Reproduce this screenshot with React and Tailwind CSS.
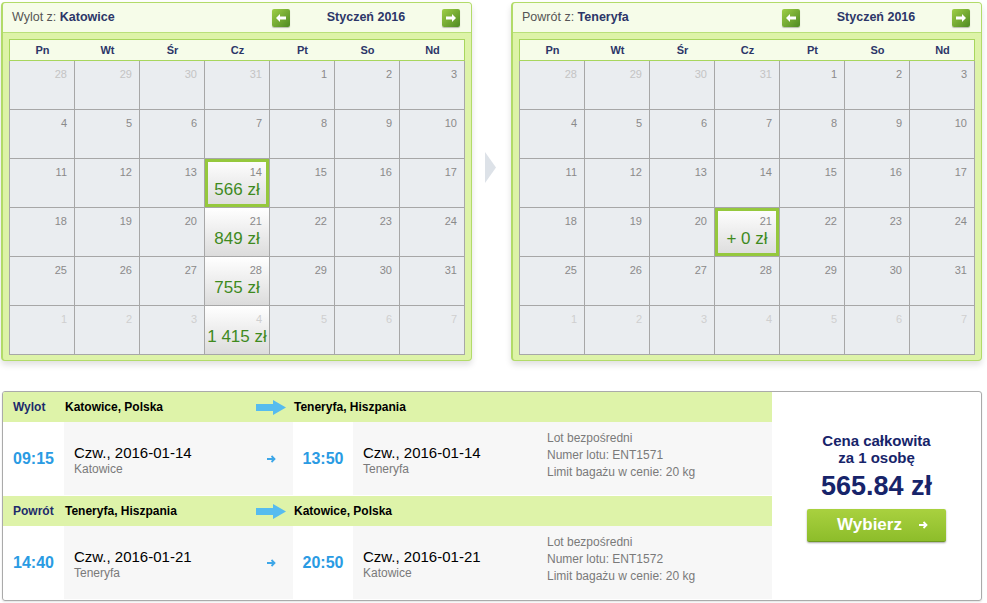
import React from "react";

const font = { fontFamily: '"Liberation Sans", Arial, sans-serif' };

const DAYS = ["Pn", "Wt", "Śr", "Cz", "Pt", "So", "Nd"];

// kind: "prev" | "cur" | "next"
function buildMonth(prices) {
  const cells = [];
  [28, 29, 30, 31].forEach((d) => cells.push({ d, kind: "prev" }));
  for (let d = 1; d <= 31; d++) cells.push({ d, kind: "cur" });
  for (let d = 1; d <= 7; d++) cells.push({ d, kind: "next" });
  return cells.map((c, i) => ({ ...c, ...(prices[i] || {}) }));
}

const outbound = buildMonth({
  17: { price: "566 zł", selected: true },
  24: { price: "849 zł" },
  31: { price: "755 zł" },
  38: { price: "1 415 zł" },
});

const inbound = buildMonth({
  24: { price: "+ 0 zł", selected: true },
});

function NavButton({ dir }) {
  return (
    <button className="w-[18px] h-[18px] rounded-[2px] flex items-center justify-center bg-gradient-to-br from-[#9fcf46] to-[#4e8a22] shadow-[0_1px_1px_rgba(0,0,0,0.25)]">
      <svg width="10" height="8" viewBox="0 0 10 8">
        {dir === "left" ? (
          <path d="M0 4 L4 0 L4 2.5 L10 2.5 L10 5.5 L4 5.5 L4 8 Z" fill="#fff" />
        ) : (
          <path d="M10 4 L6 0 L6 2.5 L0 2.5 L0 5.5 L6 5.5 L6 8 Z" fill="#fff" />
        )}
      </svg>
    </button>
  );
}

function DayCell({ cell }) {
  const numColor =
    cell.kind === "cur" ? "text-[#8a8a8a]" : cell.kind === "prev" ? "text-[#c4c4c4]" : "text-[#cfcfcf]";
  return (
    <div
      className={
        "relative h-[49px] border-r border-b border-[#a7a7a7] " +
        (cell.price ? "bg-gradient-to-b from-white to-[#dcdcdc]" : "bg-[#eaedf0]")
      }
    >
      {cell.selected && <div className="absolute inset-0 border-[3px] border-[#95c83d]" />}
      <span className={"absolute right-[7px] top-[5px] text-[11px] " + numColor}>{cell.d}</span>
      {cell.price && (
        <span className="absolute left-0 right-0 top-[18px] text-center text-[17px] text-[#3f8a1e]">
          {cell.price}
        </span>
      )}
    </div>
  );
}

function CalendarPanel({ label, city, cells, width }) {
  return (
    <div
      className="rounded-[4px] border border-[#b2db69] border-l-2 bg-[#ddf3a8] shadow-[0_4px_6px_rgba(0,0,0,0.12)]"
      style={{ width }}
    >
      <div className="h-[30px] flex items-center pl-[9px] pr-[11px] bg-[#f6fce9] border-b border-[#b9e07a] rounded-t-[3px]">
        <div className="w-[260px] text-[12.5px] text-[#555]">
          {label} <span className="font-bold text-[#2c3668]">{city}</span>
        </div>
        <NavButton dir="left" />
        <div className="flex-1 text-center text-[12.5px] font-bold text-[#2c3668]">Styczeń 2016</div>
        <NavButton dir="right" />
      </div>
      <div className="pt-[6px] pb-[5px] pl-[6px]">
        <div className="w-[456px]">
          <div className="h-[22px] grid grid-cols-[repeat(7,65px)] border border-[#a8d65e] bg-[#f6fce9]">
            {DAYS.map((d) => (
              <div key={d} className="flex items-center justify-center text-[11px] font-bold text-[#2c3668]">
                {d}
              </div>
            ))}
          </div>
          <div className="grid grid-cols-[repeat(7,65px)] border-l border-[#a7a7a7]">
            {cells.map((c, i) => (
              <DayCell key={i} cell={c} />
            ))}
          </div>
        </div>
      </div>
    </div>
  );
}

function BigArrow() {
  return (
    <svg width="30" height="15" viewBox="0 0 30 15">
      <path d="M0 4 L17 4 L17 0 L30 7.5 L17 15 L17 11 L0 11 Z" fill="#56bcef" />
    </svg>
  );
}

function SmallArrow({ color = "#3ea7e8" }) {
  return (
    <svg width="9" height="8" viewBox="0 0 9 8">
      <path d="M0 4 H7 M4.5 1 L7.5 4 L4.5 7" stroke={color} strokeWidth="1.8" fill="none" />
    </svg>
  );
}

function Leg({ title, from, to, depTime, arrTime, date, depCity, arrCity, flight }) {
  return (
    <div>
      <div className="h-[30px] grid grid-cols-[61px_229px_1fr] items-center bg-[#def3a9] text-[12px] font-bold">
        <div className="pl-[10px] text-[#1d2b6b]">{title}</div>
        <div className="flex items-center justify-between pl-[1px] pr-[7px] text-black">
          <span>{from}</span>
          <BigArrow />
        </div>
        <div className="pl-[1px] text-black">{to}</div>
      </div>
      <div className="h-[73px] grid grid-cols-[61px_229px_60px_1fr]">
        <div className="flex items-center justify-center text-[16px] font-bold text-[#2a9be3]">{depTime}</div>
        <div className="bg-[#f7f7f7] flex items-center pl-[10px] pr-[17px]">
          <div className="flex-1 pt-[3px]">
            <div className="text-[15px] text-black leading-[18px]">{date}</div>
            <div className="text-[12px] text-[#7a7a7a] leading-[15px]">{depCity}</div>
          </div>
          <SmallArrow />
        </div>
        <div className="flex items-center justify-center text-[16px] font-bold text-[#2a9be3]">{arrTime}</div>
        <div className="bg-[#f7f7f7] flex items-center pl-[10px]">
          <div className="w-[184px] pt-[3px]">
            <div className="text-[15px] text-black leading-[18px]">{date}</div>
            <div className="text-[12px] text-[#7a7a7a] leading-[15px]">{arrCity}</div>
          </div>
          <div className="text-[12px] text-[#7a7a7a] leading-[17px] -mt-[6px]">
            <div>Lot bezpośredni</div>
            <div>Numer lotu: {flight}</div>
            <div>Limit bagażu w cenie: 20 kg</div>
          </div>
        </div>
      </div>
    </div>
  );
}

export default function App() {
  return (
    <div className="w-[987px] h-[603px] bg-white pt-[2px] pl-[1px]" style={font}>
      <div className="flex items-start">
        <CalendarPanel label="Wylot z:" city="Katowice" cells={outbound} width={471} />
        <div className="w-[39px] h-[360px] flex items-center justify-center">
          <svg width="11" height="31" viewBox="0 0 11 31" className="-mt-[30px] -ml-[2px]">
            <path d="M0 0 L11 15.5 L0 31 Z" fill="#dde2e8" />
          </svg>
        </div>
        <CalendarPanel label="Powrót z:" city="Teneryfa" cells={inbound} width={471} />
      </div>

      <div className="mt-[29px] ml-[1px] w-[980px] h-[210px] flex border border-[#aaaaaa] rounded-[3px] shadow-[0_1px_2px_rgba(0,0,0,0.12)] overflow-hidden">
        <div className="w-[769px] flex flex-col gap-[1px]">
          <Leg
            title="Wylot"
            from="Katowice, Polska"
            to="Teneryfa, Hiszpania"
            depTime="09:15"
            arrTime="13:50"
            date="Czw., 2016-01-14"
            depCity="Katowice"
            arrCity="Teneryfa"
            flight="ENT1571"
          />
          <Leg
            title="Powrót"
            from="Teneryfa, Hiszpania"
            to="Katowice, Polska"
            depTime="14:40"
            arrTime="20:50"
            date="Czw., 2016-01-21"
            depCity="Teneryfa"
            arrCity="Katowice"
            flight="ENT1572"
          />
        </div>
        <div className="flex-1 flex flex-col items-center pt-[40px] text-[#17246a]">
          <div className="text-[15px] font-bold leading-[17px] text-center">
            Cena całkowita
            <br />
            za 1 osobę
          </div>
          <div className="mt-[5px] text-[27px] font-bold leading-[30px]">565.84 zł</div>
          <button className="mt-[8px] w-[139px] h-[33px] flex items-center justify-center gap-[17px] rounded-[2px] bg-gradient-to-b from-[#a9d13f] to-[#8dbd2a] border-b border-[#6f9a1f] shadow-[0_1px_2px_rgba(0,0,0,0.35)] pl-[12px]">
            <span className="text-[17px] font-bold text-white">Wybierz</span>
            <SmallArrow color="#ffffff" />
          </button>
        </div>
      </div>
    </div>
  );
}
